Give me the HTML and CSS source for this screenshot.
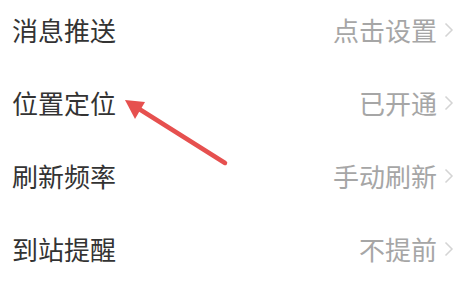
FILE: index.html
```html
<!DOCTYPE html>
<html lang="zh-CN">
<head>
<meta charset="utf-8">
<link rel="stylesheet" href="styles.css">
</head>
<body>
<div class="page">
  <ul class="list">
    <li class="row"><span class="label">消息推送</span><span class="value">点击设置<svg class="chev" width="10" height="16" viewBox="0 0 10 16"><polyline points="1.5,1.5 8,8 1.5,14.5" fill="none" stroke="#d4d4d4" stroke-width="1.5"/></svg></span></li>
    <li class="row"><span class="label">位置定位</span><span class="value">已开通<svg class="chev" width="10" height="16" viewBox="0 0 10 16"><polyline points="1.5,1.5 8,8 1.5,14.5" fill="none" stroke="#d4d4d4" stroke-width="1.5"/></svg></span></li>
    <li class="row"><span class="label">刷新频率</span><span class="value">手动刷新<svg class="chev" width="10" height="16" viewBox="0 0 10 16"><polyline points="1.5,1.5 8,8 1.5,14.5" fill="none" stroke="#d4d4d4" stroke-width="1.5"/></svg></span></li>
    <li class="row"><span class="label">到站提醒</span><span class="value">不提前<svg class="chev" width="10" height="16" viewBox="0 0 10 16"><polyline points="1.5,1.5 8,8 1.5,14.5" fill="none" stroke="#d4d4d4" stroke-width="1.5"/></svg></span></li>
  </ul>
  <svg class="arrow" width="467" height="287" viewBox="0 0 467 287">
    <line x1="225" y1="163" x2="136" y2="107" stroke="#e6504f" stroke-width="4.5" stroke-linecap="round"/>
    <polygon points="125,100 145,102 135,119" fill="#e6504f"/>
  </svg>
</div>
</body>
</html>
```
FILE: styles.css
```css
html, body {
  margin: 0;
  padding: 0;
  background: #ffffff;
}
.page {
  position: relative;
  width: 467px;
  height: 287px;
  overflow: hidden;
  font-family: "Noto Sans CJK SC", "Noto Sans", sans-serif;
}
.list {
  list-style: none;
  margin: -7px 0 0 0;
  padding: 0 13px 0 12px;
}
.row {
  height: 73px;
  display: flex;
  align-items: center;
  justify-content: space-between;
}
.label {
  font-size: 26px;
  color: #333333;
  line-height: 1;
}
.value {
  display: flex;
  align-items: center;
  font-size: 26px;
  color: #a6a6a6;
  line-height: 1;
}
.chev {
  display: block;
  margin-left: 7px;
}
.arrow {
  position: absolute;
  left: 0;
  top: 0;
}
```
